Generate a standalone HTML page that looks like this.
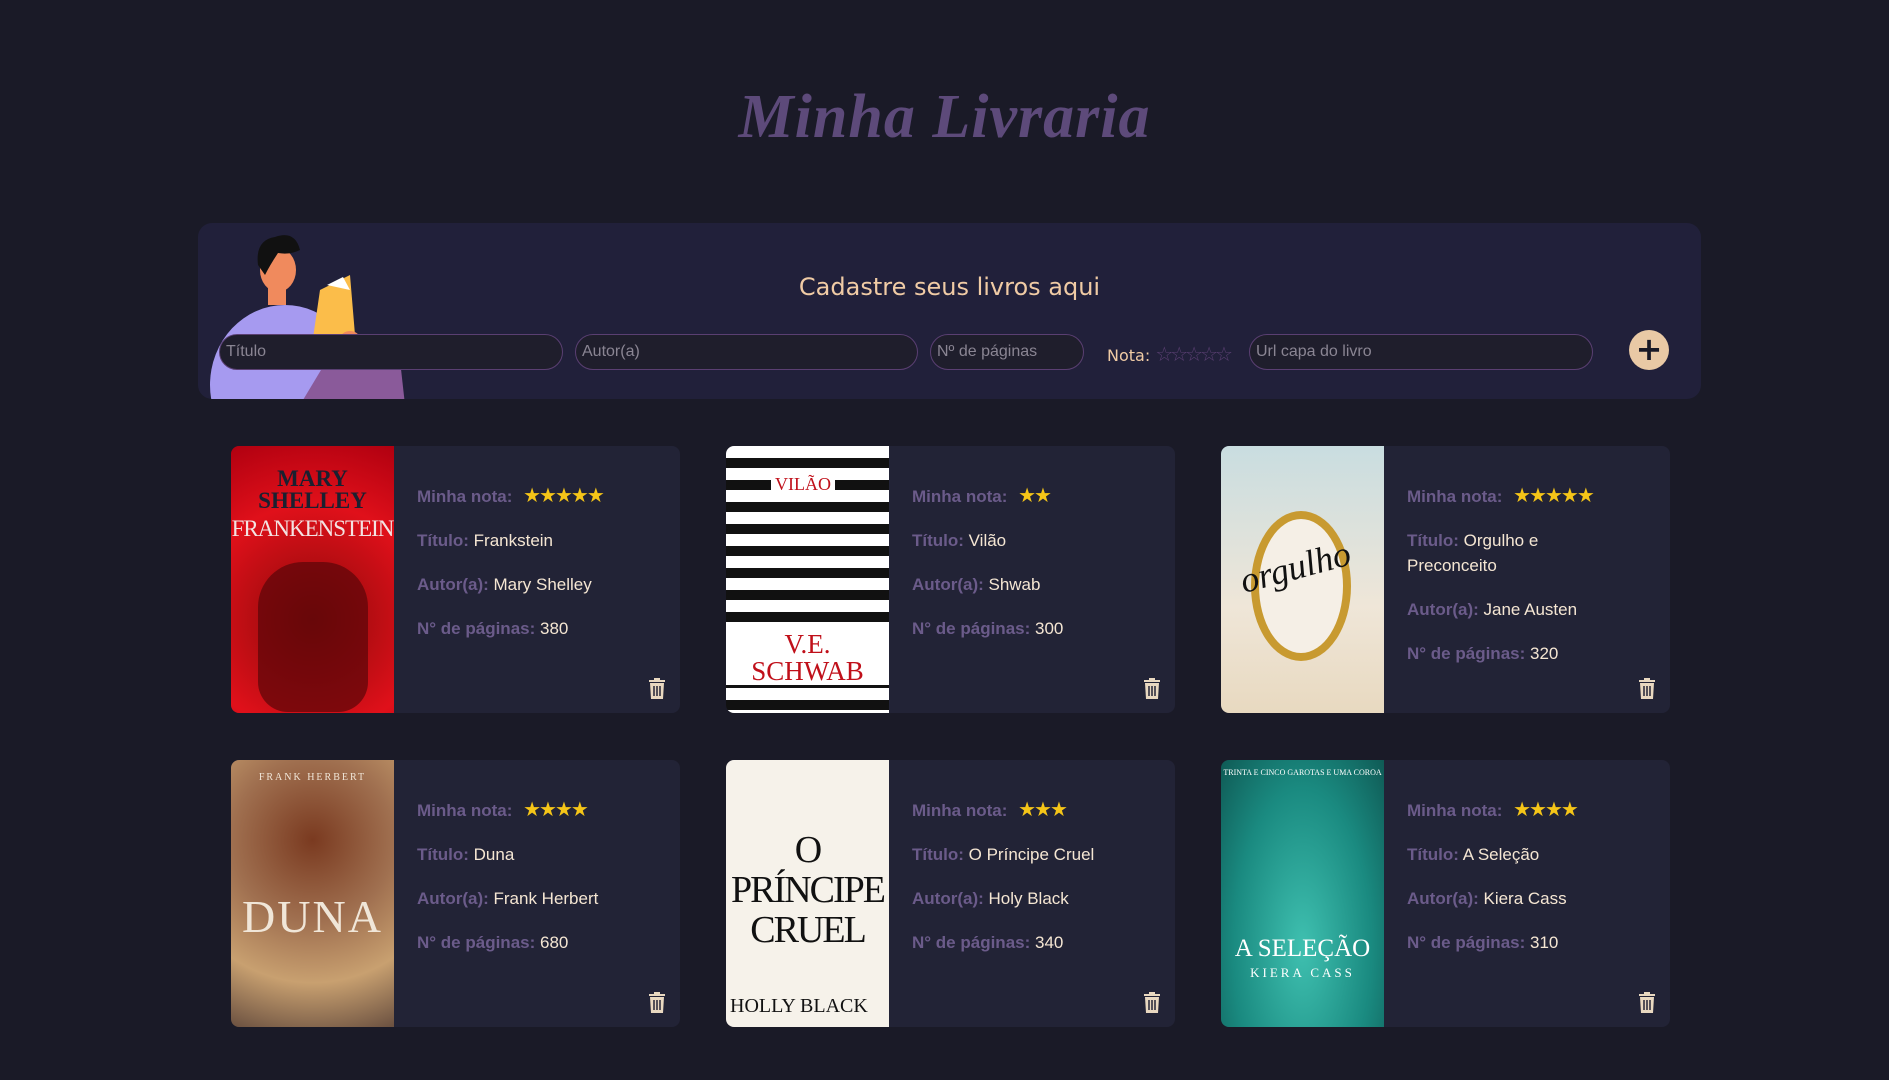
<!DOCTYPE html>
<html><head><meta charset="utf-8">
<style>
*{margin:0;padding:0;box-sizing:border-box}
body{width:1889px;height:1080px;background:#1a1a27;font-family:"DejaVu Sans","Liberation Sans",sans-serif;position:relative;overflow:hidden}
.title{position:absolute;left:0;width:1889px;top:82px;text-align:center;font-family:"Liberation Serif",serif;font-style:italic;font-weight:bold;font-size:62px;color:#5d4a7a;letter-spacing:1px}
.panel{position:absolute;left:198px;top:223px;width:1503px;height:176px;background:#21203a;border-radius:14px;overflow:hidden}
.h2{position:absolute;left:0;width:1503px;top:50px;text-align:center;font-size:24px;color:#f0cba5}
.inp{position:absolute;top:111px;height:36px;border:1px solid #5a3f72;border-radius:18px;background:#1f1e2c;color:#8a8593;font-family:"Liberation Sans",sans-serif;font-size:16px;line-height:34px;padding-left:6px}
.nota{position:absolute;left:909px;top:119px;color:#f0cba5;font-size:16px}
.nota span{color:#5a3f72;font-size:20px;letter-spacing:-3px}
.plus{position:absolute;left:1431px;top:107px;width:40px;height:40px;border-radius:50%;background:#e9c9a5;color:#1a1a27;font-size:32px;line-height:38px;text-align:center;font-weight:bold}
.card{position:absolute;width:449px;height:267px;background:#222336;border-radius:8px;overflow:hidden}
.cover{position:absolute;left:0;top:0;width:163px;height:267px;overflow:hidden;text-align:center}
.info{position:absolute;left:186px;top:38px;width:195px;font-family:"Liberation Sans",sans-serif;font-size:17px;color:#f5e6d3}
.info p{margin-bottom:19px;line-height:25px}
.info p:first-child{white-space:nowrap}
.info b{color:#6b5b8a;font-weight:bold}
.st{color:#f5c518;font-size:20px;letter-spacing:-2px;margin-left:6px}
.trash{position:absolute;left:418px;top:231px}
</style></head><body>
<div class="title">Minha Livraria</div>
<div class="panel">
<svg style="position:absolute;left:12px;top:12px" width="200" height="170" viewBox="0 0 200 170">
<ellipse cx="75" cy="150" rx="75" ry="80" fill="#a69af0"/>
<path d="M90 170 L120 120 Q160 100 190 125 L195 170Z" fill="#8a5a9a"/>
<rect x="58" y="45" width="18" height="25" fill="#f08a5d"/>
<ellipse cx="68" cy="35" rx="18" ry="22" fill="#f08a5d"/>
<path d="M48 30 Q45 5 65 2 Q85 -5 90 15 Q80 20 68 18 Q60 30 55 40Z" fill="#111"/>
<path d="M110 55 L140 40 L145 100 L102 110Z" fill="#fbbd4a"/>
<path d="M117 50 L133 42 L140 55 Z" fill="#fff"/>
<ellipse cx="140" cy="104" rx="10" ry="8" fill="#f08a5d"/>
</svg>
<div class="h2">Cadastre seus livros aqui</div>
<div class="inp" style="left:21px;width:344px">Título</div>
<div class="inp" style="left:377px;width:343px">Autor(a)</div>
<div class="inp" style="left:732px;width:154px">Nº de páginas</div>
<div class="nota">Nota: <span>☆☆☆☆☆</span></div>
<div class="inp" style="left:1051px;width:344px">Url capa do livro</div>
<div class="plus">+</div>
</div>

<div class="card" style="left:231px;top:446px">
<div class="cover" style="background:radial-gradient(circle at 50% 65%,#8a0a0a,#e0101a 60%,#b00010);color:#1a2030;font-family:'Liberation Serif',serif;font-weight:bold">
<div style="margin-top:22px;font-size:23px;line-height:22px">MARY<br>SHELLEY</div>
<div style="font-size:23px;color:#f3e3e3;font-weight:normal;margin-top:4px;letter-spacing:-1px">FRANKENSTEIN</div>
<div style="margin:20px auto 0;width:110px;height:150px;border-radius:45px 45px 30px 30px;background:#5a0608;opacity:.7"></div>
</div>
<div class="info"><p><b>Minha nota:</b> <span class="st">★★★★★</span></p><p><b>Título:</b> Frankstein</p><p><b>Autor(a):</b> Mary Shelley</p><p><b>N° de páginas:</b> 380</p></div>
<svg class="trash" width="16" height="22" viewBox="0 0 16 22"><path d="M5 1h6v2h5v2H0V3h5z M1 6h14l-1 16H2z" fill="#e9d8c0"/><path d="M5 9v10M8 9v10M11 9v10" stroke="#222336" stroke-width="1.5"/></svg>
</div>

<div class="card" style="left:726px;top:446px">
<div class="cover" style="background:repeating-linear-gradient(180deg,#fff 0 12px,#111 12px 22px);font-family:'Liberation Serif',serif;color:#c0101a">
<div style="position:absolute;top:28px;left:45px;background:#fff;padding:0 4px;font-size:18px">VILÃO</div>
<div style="position:absolute;top:185px;left:0;width:163px;background:#fff;font-size:27px;line-height:27px">V.E.<br>SCHWAB</div>
</div>
<div class="info"><p><b>Minha nota:</b> <span class="st">★★</span></p><p><b>Título:</b> Vilão</p><p><b>Autor(a):</b> Shwab</p><p><b>N° de páginas:</b> 300</p></div>
<svg class="trash" width="16" height="22" viewBox="0 0 16 22"><path d="M5 1h6v2h5v2H0V3h5z M1 6h14l-1 16H2z" fill="#e9d8c0"/><path d="M5 9v10M8 9v10M11 9v10" stroke="#222336" stroke-width="1.5"/></svg>
</div>

<div class="card" style="left:1221px;top:446px">
<div class="cover" style="background:linear-gradient(180deg,#c9dde0,#efe6d8 60%,#e8d9c0)">
<div style="position:absolute;left:30px;top:65px;width:100px;height:150px;border:8px solid #c89a30;border-radius:50%;background:#f5efe6"></div>
<div style="position:absolute;left:18px;top:100px;font-family:'Liberation Serif',serif;font-style:italic;font-size:36px;color:#111;transform:rotate(-15deg)">orgulho</div>
</div>
<div class="info"><p><b>Minha nota:</b> <span class="st">★★★★★</span></p><p><b>Título:</b> Orgulho e Preconceito</p><p><b>Autor(a):</b> Jane Austen</p><p><b>N° de páginas:</b> 320</p></div>
<svg class="trash" width="16" height="22" viewBox="0 0 16 22"><path d="M5 1h6v2h5v2H0V3h5z M1 6h14l-1 16H2z" fill="#e9d8c0"/><path d="M5 9v10M8 9v10M11 9v10" stroke="#222336" stroke-width="1.5"/></svg>
</div>

<div class="card" style="left:231px;top:760px">
<div class="cover" style="background:radial-gradient(circle at 50% 30%,#7a3a20,#a07050 40%,#c8a070 70%,#6a5040);font-family:'Liberation Serif',serif;color:#f0e6d8">
<div style="font-size:10px;margin-top:12px;letter-spacing:2px">FRANK HERBERT</div>
<div style="position:absolute;top:130px;width:163px;font-size:46px;letter-spacing:2px">DUNA</div>
</div>
<div class="info"><p><b>Minha nota:</b> <span class="st">★★★★</span></p><p><b>Título:</b> Duna</p><p><b>Autor(a):</b> Frank Herbert</p><p><b>N° de páginas:</b> 680</p></div>
<svg class="trash" width="16" height="22" viewBox="0 0 16 22"><path d="M5 1h6v2h5v2H0V3h5z M1 6h14l-1 16H2z" fill="#e9d8c0"/><path d="M5 9v10M8 9v10M11 9v10" stroke="#222336" stroke-width="1.5"/></svg>
</div>

<div class="card" style="left:726px;top:760px">
<div class="cover" style="background:#f6f2ea;font-family:'Liberation Serif',serif;color:#111">
<div style="position:absolute;top:70px;width:163px;font-size:38px;line-height:40px;letter-spacing:-2px">O<br>PRÍNCIPE<br>CRUEL</div>
<div style="position:absolute;top:235px;left:4px;font-size:20px">HOLLY BLACK</div>
</div>
<div class="info"><p><b>Minha nota:</b> <span class="st">★★★</span></p><p><b>Título:</b> O Príncipe Cruel</p><p><b>Autor(a):</b> Holy Black</p><p><b>N° de páginas:</b> 340</p></div>
<svg class="trash" width="16" height="22" viewBox="0 0 16 22"><path d="M5 1h6v2h5v2H0V3h5z M1 6h14l-1 16H2z" fill="#e9d8c0"/><path d="M5 9v10M8 9v10M11 9v10" stroke="#222336" stroke-width="1.5"/></svg>
</div>

<div class="card" style="left:1221px;top:760px">
<div class="cover" style="background:radial-gradient(ellipse at 50% 70%,#3fc0b0,#1a8a80 60%,#0f5a55);font-family:'Liberation Serif',serif;color:#fff">
<div style="font-size:8px;margin-top:8px">TRINTA E CINCO GAROTAS E UMA COROA</div>
<div style="position:absolute;top:175px;width:163px;font-size:25px">A SELEÇÃO</div>
<div style="position:absolute;top:205px;width:163px;font-size:13px;letter-spacing:3px">KIERA CASS</div>
</div>
<div class="info"><p><b>Minha nota:</b> <span class="st">★★★★</span></p><p><b>Título:</b> A Seleção</p><p><b>Autor(a):</b> Kiera Cass</p><p><b>N° de páginas:</b> 310</p></div>
<svg class="trash" width="16" height="22" viewBox="0 0 16 22"><path d="M5 1h6v2h5v2H0V3h5z M1 6h14l-1 16H2z" fill="#e9d8c0"/><path d="M5 9v10M8 9v10M11 9v10" stroke="#222336" stroke-width="1.5"/></svg>
</div>
</body></html>
